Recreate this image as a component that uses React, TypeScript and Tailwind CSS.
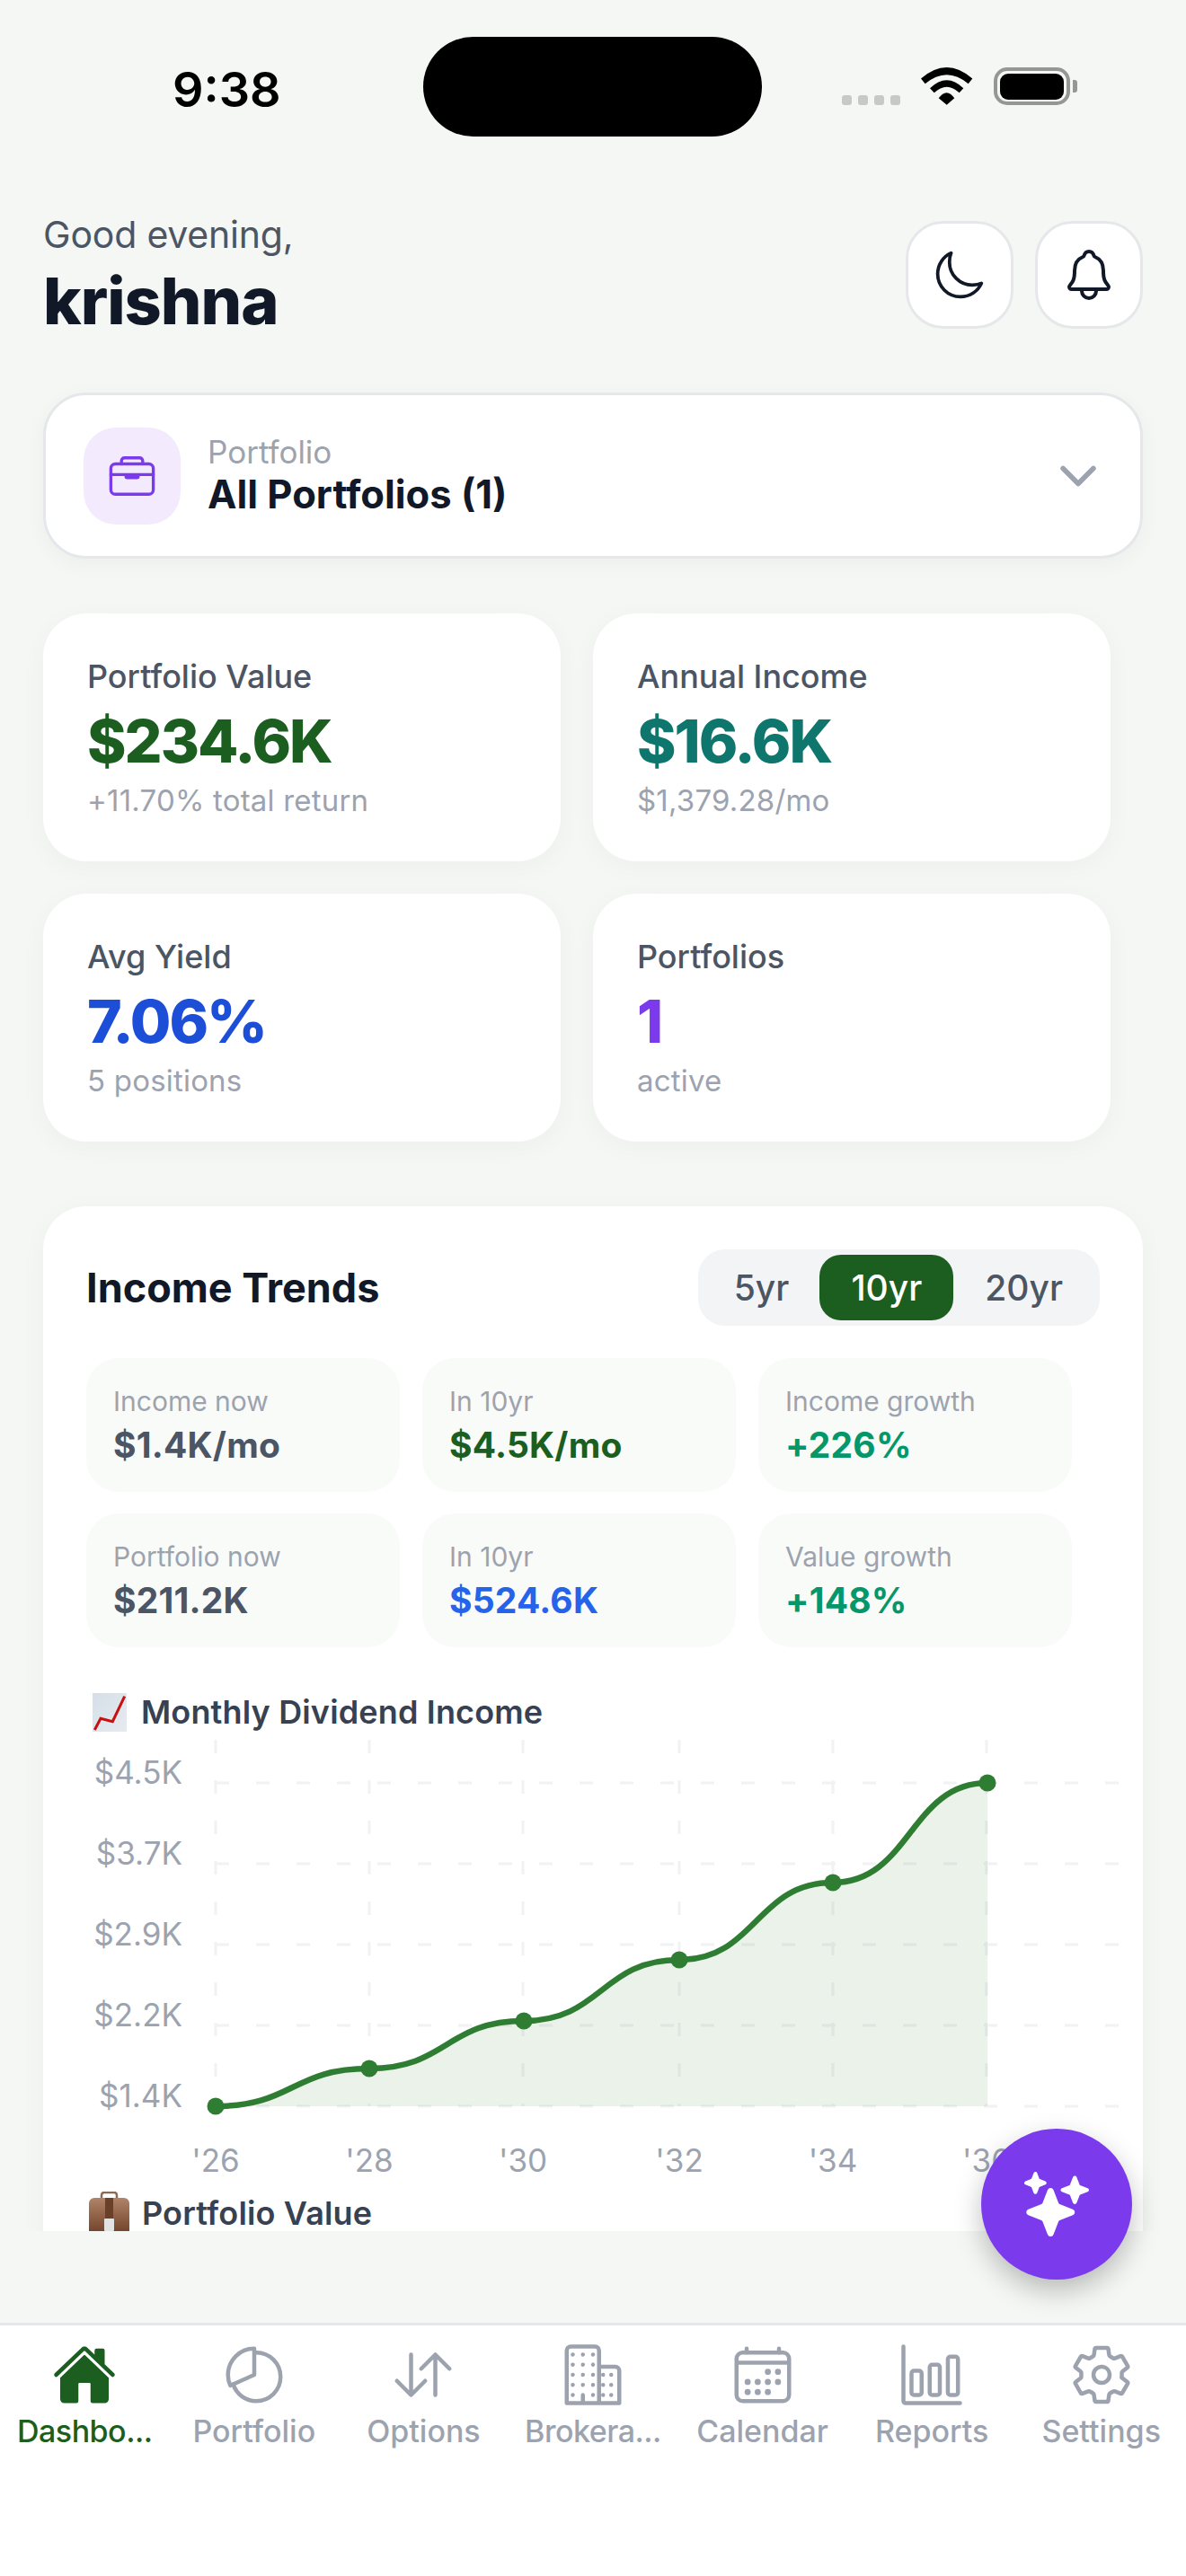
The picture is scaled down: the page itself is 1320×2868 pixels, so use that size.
import {
  IoHome,
  IoPieChartOutline,
  IoSwapVerticalOutline,
  IoBusinessOutline,
  IoCalendarOutline,
  IoBarChartOutline,
  IoSettingsOutline,
  IoMoonOutline,
  IoNotificationsOutline,
  IoBriefcaseOutline,
  IoChevronDownOutline,
  IoSparkles,
} from "react-icons/io5";

const stats = [
  { label: "Portfolio Value", value: "$234.6K", sub: "+11.70% total return", color: "text-[#1b5e20]" },
  { label: "Annual Income", value: "$16.6K", sub: "$1,379.28/mo", color: "text-[#0f766e]" },
  { label: "Avg Yield", value: "7.06%", sub: "5 positions", color: "text-[#1d4ed8]" },
  { label: "Portfolios", value: "1", sub: "active", color: "text-[#7c3aed]" },
];

const metrics = [
  { label: "Income now", value: "$1.4K/mo", color: "text-[#4b5563]" },
  { label: "In 10yr", value: "$4.5K/mo", color: "text-[#1b5e20]" },
  { label: "Income growth", value: "+226%", color: "text-[#059669]" },
  { label: "Portfolio now", value: "$211.2K", color: "text-[#4b5563]" },
  { label: "In 10yr", value: "$524.6K", color: "text-[#2563eb]" },
  { label: "Value growth", value: "+148%", color: "text-[#059669]" },
];

const tabs = [
  { label: "Dashbo...", Icon: IoHome, active: true, tight: true },
  { label: "Portfolio", Icon: IoPieChartOutline },
  { label: "Options", Icon: IoSwapVerticalOutline },
  { label: "Brokera...", Icon: IoBusinessOutline, tight: true },
  { label: "Calendar", Icon: IoCalendarOutline },
  { label: "Reports", Icon: IoBarChartOutline },
  { label: "Settings", Icon: IoSettingsOutline },
];

// chart points in page pixels, the viewBox below uses the same numbers
const points: [number, number][] = [
  [240, 2345],
  [411, 2303],
  [583, 2250],
  [756, 2182],
  [927, 2096],
  [1099, 1985],
];
const gridX = [240, 411, 582, 756, 927, 1098];
const gridY = [1985, 2075, 2165, 2255, 2345];
const yLabels = ["$4.5K", "$3.7K", "$2.9K", "$2.2K", "$1.4K"];
const xLabels = ["'26", "'28", "'30", "'32", "'34", "'36"];

function linePath() {
  let d = `M${points[0][0]} ${points[0][1]}`;
  for (let i = 1; i < points.length; i++) {
    const [x0, y0] = points[i - 1];
    const [x1, y1] = points[i];
    const mid = (x0 + x1) / 2;
    d += ` C${mid} ${y0} ${mid} ${y1} ${x1} ${y1}`;
  }
  return d;
}

function StatusBar() {
  return (
    <div className="flex h-[190px] shrink-0 items-start pt-[41px]">
      <div className="w-[471px] pl-[192px] pt-[24px] text-[54px] font-semibold leading-[70px] text-black">9:38</div>
      <div className="h-[111px] w-[377px] rounded-[56px] bg-black" />
      <div className="ml-[89px] mt-[34px] flex items-end">
        <div className="flex gap-[7px]">
          {[0, 1, 2, 3].map((i) => (
            <div key={i} className="h-[11px] w-[11px] rounded-[3px] bg-[#c8c8c8]" />
          ))}
        </div>
        <svg className="ml-[23px]" width="58" height="42" viewBox="0 0 58 42">
          <path d="M0 12.5Q28.7-12.5 57.3 12.5L52.7 18.3Q28.7-1.7 4.7 18.3Z" fill="#000" />
          <path d="M10 23.3Q28.7 5.3 47.3 23.3L42.7 28.3Q28.7 15.1 14.7 28.3Z" fill="#000" />
          <path d="M19.7 34.3Q28.7 22.3 37.3 34.3L28.7 41.7Z" fill="#000" />
        </svg>
        <div className="ml-[23px] flex items-center">
          <div className="flex h-[42px] w-[85px] items-center justify-center rounded-[15px] border-[4px] border-[#969696]">
            <div className="h-[29px] w-[71px] rounded-[9px] bg-black" />
          </div>
          <div className="ml-[3px] h-[14px] w-[5px] rounded-r-[3px] bg-[#969696]" />
        </div>
      </div>
    </div>
  );
}

function ChartEmoji() {
  return (
    <svg className="shrink-0" width="38" height="43" viewBox="0 0 38 43">
      <defs>
        <linearGradient id="paper" x1="0" y1="0" x2="1" y2="1">
          <stop offset="0" stopColor="#d5dfe8" />
          <stop offset="1" stopColor="#e6ebf0" />
        </linearGradient>
      </defs>
      <rect width="38" height="43" fill="url(#paper)" />
      <path d="M2.3 41L9 28.3L22.3 31.7L35.7 3.7" fill="none" stroke="#c90f0f" strokeWidth="3" />
    </svg>
  );
}

function CaseEmoji() {
  return (
    <svg className="shrink-0" width="45" height="50" viewBox="0 0 45 50">
      <defs>
        <linearGradient id="leather" x1="0" y1="0" x2="0" y2="1">
          <stop offset="0" stopColor="#b08468" />
          <stop offset="1" stopColor="#6b3c24" />
        </linearGradient>
      </defs>
      <path d="M14 8V4Q14 1 17 1H28Q31 1 31 4V8" fill="none" stroke="#8a6a55" strokeWidth="2.5" />
      <rect x="0" y="7" width="45" height="43" rx="6" fill="url(#leather)" />
      <rect x="18" y="7" width="9" height="24" fill="#6b4029" />
      <rect x="17" y="30" width="11" height="14" rx="1" fill="#e3e3e3" />
    </svg>
  );
}

function StatCard({ label, value, sub, color }: (typeof stats)[number]) {
  return (
    <div className="h-[276px] rounded-[48px] bg-white px-[49px] pt-[48px] shadow-[0_6px_30px_rgba(0,0,0,0.035)]">
      <div className="text-[36px] font-medium leading-[44px] text-[#4b5563]">{label}</div>
      <div className={`mt-[10px] text-[66px] font-extrabold leading-[80px] tracking-[-2px] ${color}`}>{value}</div>
      <div className="mt-[6px] text-[33px] leading-[40px] tracking-[0.2px] text-[#9ca3af]">{sub}</div>
    </div>
  );
}

function MetricTile({ label, value, color }: (typeof metrics)[number]) {
  return (
    <div className="h-[149px] rounded-[36px] bg-[#f9fbf9] px-[30px] pt-[29px]">
      <div className="text-[30px] leading-[38px] text-[#9ca3af]">{label}</div>
      <div className={`mt-[6px] text-[39px] font-bold leading-[48px] tracking-[0.2px] ${color}`}>{value}</div>
    </div>
  );
}

function IncomeChart() {
  const line = linePath();
  return (
    <svg className="block" width="1176" height="510" viewBox="96 1930 1176 510">
      {gridX.map((x) => (
        <line key={x} x1={x} x2={x} y1={1937} y2={2345} stroke="#f1f2f4" strokeWidth="3" strokeDasharray="15 30" />
      ))}
      {gridY.map((y) => (
        <line key={y} x1={240} x2={1246} y1={y} y2={y} stroke="#f1f2f4" strokeWidth="3" strokeDasharray="15 30" />
      ))}
      <path d={`${line} L1099 2345 L240 2345 Z`} fill="#2e7d32" fillOpacity="0.1" />
      <path d={line} fill="none" stroke="#2e7d32" strokeWidth="6.5" />
      {points.map(([x, y]) => (
        <circle key={x} cx={x} cy={y} r="9.5" fill="#2e7d32" />
      ))}
      {yLabels.map((label, i) => (
        <text key={label} x="203" y={gridY[i] + 1} textAnchor="end" fontSize="35" fill="#9ca3af">
          {label}
        </text>
      ))}
      {xLabels.map((label, i) => (
        <text key={label} x={gridX[i]} y="2418" textAnchor="middle" fontSize="35" fill="#9ca3af">
          {label}
        </text>
      ))}
    </svg>
  );
}

export default function App() {
  return (
    <div className="relative flex h-[2868px] w-[1320px] flex-col overflow-hidden bg-[#f5f7f5] font-['Inter',sans-serif]">
      <StatusBar />

      <main className="h-[2294px] shrink-0 overflow-hidden px-[48px] pt-[56px]">
        {/* Header */}
        <div className="flex h-[120px] items-center justify-between">
          <div>
            <div className="text-[41px] leading-[52px] tracking-[-0.2px] text-[#4b5563]">Good evening,</div>
            <div className="mt-[6px] text-[72px] font-extrabold leading-[84px] tracking-[-1px] text-[#111827]">krishna</div>
          </div>
          <div className="flex gap-[24px]">
            <button className="flex h-[120px] w-[120px] items-center justify-center rounded-[42px] border-[3px] border-[#e5e7eb] bg-white text-[#111827]">
              <IoMoonOutline size={60} />
            </button>
            <button className="flex h-[120px] w-[120px] items-center justify-center rounded-[42px] border-[3px] border-[#e5e7eb] bg-white text-[#111827]">
              <IoNotificationsOutline size={64} />
            </button>
          </div>
        </div>

        {/* Portfolio picker */}
        <div className="mt-[71px] flex h-[185px] items-center rounded-[48px] border-[3px] border-[#e5e7eb] bg-white pl-[42px] pr-[39px] shadow-[0_6px_24px_rgba(0,0,0,0.04)]">
          <div className="flex h-[108px] w-[108px] items-center justify-center rounded-[36px] bg-[#f3ebfd] text-[#7c3aed]">
            <IoBriefcaseOutline size={54} />
          </div>
          <div className="ml-[30px] flex-1">
            <div className="text-[35px] leading-[40px] text-[#9ca3af]">Portfolio</div>
            <div className="mt-[1px] text-[43.5px] font-bold leading-[52px] text-[#111827]">All Portfolios (1)</div>
          </div>
          <IoChevronDownOutline size={60} className="text-[#9ca3af]" />
        </div>

        {/* Stats */}
        <div className="mt-[61px] grid w-[1188px] grid-cols-2 gap-[36px]">
          {stats.map((s) => (
            <StatCard key={s.label} {...s} />
          ))}
        </div>

        {/* Income trends */}
        <section className="mt-[72px] h-[1300px] rounded-t-[48px] bg-white px-[48px] pt-[48px] shadow-[0_6px_30px_rgba(0,0,0,0.035)]">
          <div className="flex items-center justify-between">
            <h2 className="text-[45px] font-bold leading-[56px] text-[#111827]">Income Trends</h2>
            <div className="flex h-[85px] items-center rounded-[30px] bg-[#f3f4f6] px-[6px]">
              <div className="px-[34px] text-[39px] font-medium leading-[73px] text-[#4b5563]">5yr</div>
              <div className="rounded-[24px] bg-[#1b5e20] px-[35px] text-[39px] font-medium leading-[73px] text-white">10yr</div>
              <div className="px-[35px] text-[39px] font-medium leading-[73px] text-[#4b5563]">20yr</div>
            </div>
          </div>

          <div className="mt-[36px] grid w-[1097px] grid-cols-3 gap-x-[25px] gap-y-[24px]">
            {metrics.map((m) => (
              <MetricTile key={m.label + m.value} {...m} />
            ))}
          </div>

          <div className="mt-[48px] flex h-[48px] items-center gap-[16px] pl-[7px]">
            <ChartEmoji />
            <div className="text-[36px] font-semibold leading-[48px] tracking-[0.15px] text-[#374151]">Monthly Dividend Income</div>
          </div>
          <IncomeChart />
          <div className="flex h-[50px] items-start gap-[14px] pl-[3px]">
            <CaseEmoji />
            <div className="text-[36px] font-semibold leading-[48px] tracking-[0.15px] text-[#374151]">Portfolio Value</div>
          </div>
        </section>
      </main>

      <div className="flex-1" />

      {/* Bottom tabs */}
      <nav className="grid h-[282px] shrink-0 grid-cols-7 border-t-[3px] border-[#e5e7eb] bg-white pt-[19px]">
        {tabs.map(({ label, Icon, active, tight }) => (
          <div key={label} className={`flex flex-col items-center ${active ? "text-[#1b5e20]" : "text-[#9ca3af]"}`}>
            <Icon size={72} />
            <div className={`mt-[5px] whitespace-nowrap text-[34px] font-medium leading-[44px] ${tight ? "tracking-[-0.5px]" : ""}`}>{label}</div>
          </div>
        ))}
      </nav>

      {/* AI button */}
      <button className="absolute bottom-[330px] right-[60px] flex h-[168px] w-[168px] items-center justify-center rounded-full bg-[#7c3aed] text-white shadow-[0_12px_30px_rgba(0,0,0,0.25)]">
        <IoSparkles size={72} />
      </button>
    </div>
  );
}
